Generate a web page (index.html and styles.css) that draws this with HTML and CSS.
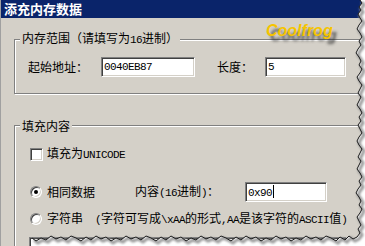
FILE: index.html
```html
<!DOCTYPE html>
<html>
<head>
<meta charset="utf-8">
<link rel="stylesheet" href="styles.css">
</head>
<body>
<div class="dialog">
  <div class="titlebar">添充内存数据</div>
  <div class="content">
    <fieldset class="group g1">
      <legend>内存范围（请填写为<span class="a">16</span>进制）</legend>
      <div class="inner">
        <div class="row">
          <span class="lbl addr">起始地址：</span>
          <div class="edit e1"><span class="a">0040EB87</span></div>
          <span class="lbl len">长度：</span>
          <div class="edit e2"><span class="a">5</span></div>
        </div>
      </div>
    </fieldset>
    <fieldset class="group g2">
      <legend>填充内容</legend>
      <div class="inner">
        <div class="opt check-row">
          <span class="checkbox"></span>
          <span class="txt">填充为<span class="a">UNICODE</span></span>
        </div>
        <div class="opt radio-row r1">
          <span class="radio on"></span>
          <span class="txt same">相同数据</span>
          <span class="lbl content-lbl">内容<span class="a">(16</span>进制<span class="a">)</span>：</span>
          <div class="edit e3"><span class="a caret">0x90</span></div>
        </div>
        <div class="opt radio-row r2">
          <span class="radio"></span>
          <span class="txt">字符串<span class="a">  (</span>字符可写成<span class="a">\xAA</span>的形式<span class="a">,AA</span>是该字符的<span class="a">ASCII</span>值<span class="a">)</span></span>
        </div>
        <div class="memo"></div>
      </div>
    </fieldset>
  </div>
  <div class="watermark">Coolfrog</div>
  <svg class="tear" width="365" height="246" viewBox="0 0 365 246">
    <defs>
      <filter id="blur" x="-20%" y="-20%" width="140%" height="140%">
        <feGaussianBlur stdDeviation="1.3"/>
      </filter>
    </defs>
    <polygon fill="#ffffff" points="359,0 361,3 358,7 360,10 357,14 359,18 361,21 358,25 356,29 359,33 361,37 358,41 360,45 357,49 355,53 358,57 360,61 358,65 361,69 359,73 356,77 358,81 361,85 359,89 357,93 360,97 358,101 356,105 359,109 361,113 358,117 360,121 357,125 359,129 361,133 358,137 356,141 358,145 361,149 359,153 357,157 360,161 358,165 356,169 359,173 361,177 358,181 360,185 357,189 355,193 358,197 360,201 358,205 361,209 359,213 356,217 358,221 360,225 357,229 359,233 356,237 352,239 348,236 344,240 339,237 335,241 330,238 325,236 320,240 315,237 310,239 305,236 300,240 295,238 290,241 285,237 280,239 275,236 270,240 265,238 260,241 255,237 250,239 245,236 240,240 235,237 230,241 225,238 220,236 215,240 210,237 205,239 200,236 195,240 190,238 185,241 180,237 175,239 170,236 165,240 160,237 155,241 150,238 145,236 140,240 135,237 130,239 125,236 120,240 115,238 110,241 105,237 100,239 95,236 90,240 85,237 80,241 75,238 70,236 65,240 60,237 55,239 50,236 45,240 40,238 35,241 31,238 31,246 365,246 365,0"/>
    <polyline class="shadow" filter="url(#blur)" points="359,0 361,3 358,7 360,10 357,14 359,18 361,21 358,25 356,29 359,33 361,37 358,41 360,45 357,49 355,53 358,57 360,61 358,65 361,69 359,73 356,77 358,81 361,85 359,89 357,93 360,97 358,101 356,105 359,109 361,113 358,117 360,121 357,125 359,129 361,133 358,137 356,141 358,145 361,149 359,153 357,157 360,161 358,165 356,169 359,173 361,177 358,181 360,185 357,189 355,193 358,197 360,201 358,205 361,209 359,213 356,217 358,221 360,225 357,229 359,233 356,237 352,239 348,236 344,240 339,237 335,241 330,238 325,236 320,240 315,237 310,239 305,236 300,240 295,238 290,241 285,237 280,239 275,236 270,240 265,238 260,241 255,237 250,239 245,236 240,240 235,237 230,241 225,238 220,236 215,240 210,237 205,239 200,236 195,240 190,238 185,241 180,237 175,239 170,236 165,240 160,237 155,241 150,238 145,236 140,240 135,237 130,239 125,236 120,240 115,238 110,241 105,237 100,239 95,236 90,240 85,237 80,241 75,238 70,236 65,240 60,237 55,239 50,236 45,240 40,238 35,241 31,238"/>
    <polyline class="edge" points="359,0 361,3 358,7 360,10 357,14 359,18 361,21 358,25 356,29 359,33 361,37 358,41 360,45 357,49 355,53 358,57 360,61 358,65 361,69 359,73 356,77 358,81 361,85 359,89 357,93 360,97 358,101 356,105 359,109 361,113 358,117 360,121 357,125 359,129 361,133 358,137 356,141 358,145 361,149 359,153 357,157 360,161 358,165 356,169 359,173 361,177 358,181 360,185 357,189 355,193 358,197 360,201 358,205 361,209 359,213 356,217 358,221 360,225 357,229 359,233 356,237 352,239 348,236 344,240 339,237 335,241 330,238 325,236 320,240 315,237 310,239 305,236 300,240 295,238 290,241 285,237 280,239 275,236 270,240 265,238 260,241 255,237 250,239 245,236 240,240 235,237 230,241 225,238 220,236 215,240 210,237 205,239 200,236 195,240 190,238 185,241 180,237 175,239 170,236 165,240 160,237 155,241 150,238 145,236 140,240 135,237 130,239 125,236 120,240 115,238 110,241 105,237 100,239 95,236 90,240 85,237 80,241 75,238 70,236 65,240 60,237 55,239 50,236 45,240 40,238 35,241 31,238"/>
  </svg>
</div>
</body>
</html>
```

FILE: styles.css
```css
html, body {
  margin: 0;
  padding: 0;
  overflow: hidden;
  background: #ffffff;
}

body {
  width: 365px;
  height: 246px;
}

.dialog {
  position: relative;
  box-sizing: border-box;
  width: 400px;
  height: 246px;
  background: #d4d0c8;
  border-left: 1px solid #a0a0a0;
  font-family: "Noto Sans CJK SC", sans-serif;
  font-size: 12px;
  line-height: 14px;
  color: #000000;
  overflow: hidden;
}

.a {
  font-family: "Liberation Mono", monospace;
  font-size: 11px;
  letter-spacing: -0.6px;
  white-space: pre;
}

.titlebar {
  height: 18px;
  background: #0a246a;
  color: #ffffff;
  font-weight: bold;
  font-size: 13px;
  line-height: 18px;
  padding-left: 3px;
}

.content {
  padding-left: 13px;
}

.group {
  margin: 0;
  padding: 0;
  min-width: 0;
  border: 1px solid #808080;
  box-shadow: inset 1px 1px 0 #ffffff, 1px 1px 0 #ffffff;
}

.group legend {
  margin-left: 5px;
  padding: 0 2px;
  line-height: 15px;
  background: #d4d0c8;
}

.g1 {
  margin-top: 12px;
}

.g1 .inner {
  padding: 9px 0 16px 13px;
}

.row {
  display: flex;
  align-items: center;
  height: 20px;
}

.lbl {
  white-space: nowrap;
}

.addr {
  width: 73px;
}

.len {
  width: 48px;
  margin-left: 22px;
}

.edit {
  box-sizing: border-box;
  height: 20px;
  display: flex;
  align-items: center;
  padding-left: 2px;
  background: #ffffff;
  border: 1px solid;
  border-color: #808080 #ffffff #ffffff #808080;
  box-shadow: inset 1px 1px 0 #404040, inset -1px -1px 0 #d4d0c8;
}

.e1 { width: 94px; }
.e2 { width: 81px; }
.e3 { width: 82px; margin-left: 26px; }

.caret::after {
  content: "";
  display: inline-block;
  width: 1px;
  height: 13px;
  background: #000000;
  vertical-align: -2px;
  margin-left: 1px;
}

.g2 {
  margin-top: 24px;
  height: 200px;
}

.g2 .inner {
  padding: 12px 0 0 15px;
}

.opt {
  display: flex;
  align-items: center;
  white-space: nowrap;
}

.check-row { height: 18px; }
.r1 { height: 20px; margin-top: 19px; }
.r2 { height: 18px; margin-top: 8px; }

.checkbox {
  box-sizing: border-box;
  width: 13px;
  height: 13px;
  margin-right: 4px;
  background: #ffffff;
  border: 1px solid;
  border-color: #808080 #ffffff #ffffff #808080;
  box-shadow: inset 1px 1px 0 #404040, inset -1px -1px 0 #d4d0c8;
}

.radio {
  position: relative;
  box-sizing: border-box;
  width: 12px;
  height: 12px;
  margin-right: 5px;
  border-radius: 50%;
  background: #ffffff;
  border: 1px solid;
  border-color: #808080 #ffffff #ffffff #808080;
  box-shadow: inset 1px 1px 0 #404040, inset -1px -1px 0 #d4d0c8;
}

.radio.on::after {
  content: "";
  position: absolute;
  left: 3px;
  top: 3px;
  width: 4px;
  height: 4px;
  border-radius: 50%;
  background: #000000;
}

.same {
  width: 88px;
}

.content-lbl {
  width: 84px;
}

.memo {
  box-sizing: border-box;
  margin-top: 9px;
  margin-left: -1px;
  width: 318px;
  height: 30px;
  background: #ffffff;
  border: 1px solid;
  border-color: #808080 #ffffff #ffffff #808080;
  box-shadow: inset 1px 1px 0 #404040;
}

.watermark {
  position: absolute;
  left: 265px;
  top: 22px;
  font-family: "Liberation Sans", Arial, sans-serif;
  font-size: 16px;
  font-weight: bold;
  font-style: italic;
  line-height: 18px;
  color: #f5c400;
  text-shadow: 4px 5px 3px rgba(40, 40, 40, 0.75);
}

.tear {
  position: absolute;
  left: 0;
  top: 0;
  pointer-events: none;
}

.tear .shadow {
  fill: none;
  stroke: #9a9a9a;
  stroke-width: 3;
  transform: translate(2px, 2px);
}

.tear .edge {
  fill: none;
  stroke: #1a1a1a;
  stroke-width: 1;
}
```
